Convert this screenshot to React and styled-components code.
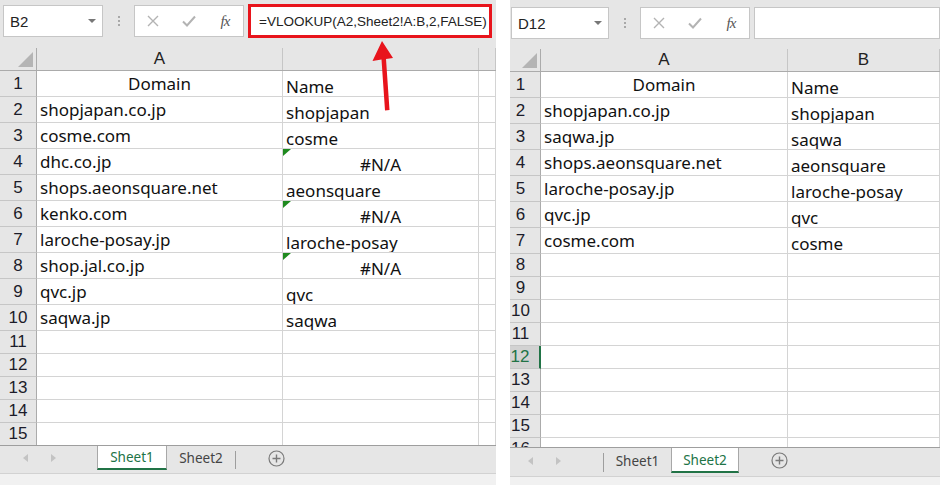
import React from 'react'
import styled, { createGlobalStyle, css } from 'styled-components'

const GlobalStyle = createGlobalStyle`
  html, body { margin: 0; padding: 0; background: #fff; }
  body { width: 940px; height: 485px; overflow: hidden; }
`

const Page = styled.div`
  display: flex;
  gap: 14px;
  width: 940px;
  height: 485px;
  overflow: hidden;
  background: #fff;
`

const Panel = styled.div`
  position: relative;
  flex: 0 0 ${p => p.$w}px;
  display: flex;
  flex-direction: column;
  background: #e6e6e6;
  overflow: hidden;
`

const TopBar = styled.div`
  flex: 0 0 ${p => p.$h}px;
  box-sizing: border-box;
  display: flex;
  align-items: flex-start;
  padding: ${p => p.$pt}px ${p => p.$pr}px 0 ${p => p.$pl}px;
`

const NameBox = styled.div`
  box-sizing: border-box;
  flex: 0 0 ${p => p.$w}px;
  height: 32px;
  background: #fff;
  border: 1px solid #c6c6c6;
  display: flex;
  align-items: center;
  justify-content: space-between;
  padding: 0 6px 0 6px;
  font: 15px "Liberation Sans", sans-serif;
  color: #222;
`

const Caret = styled.span`
  width: 0;
  height: 0;
  border-left: 4px solid transparent;
  border-right: 4px solid transparent;
  border-top: 4px solid #777;
`

const Dots = styled.div`
  flex: 0 0 31px;
  height: 32px;
  display: flex;
  flex-direction: column;
  align-items: center;
  justify-content: center;
  gap: 2px;
  > i {
    width: 2px;
    height: 2px;
    background: #a8a8a8;
  }
`

const FnBox = styled.div`
  box-sizing: border-box;
  flex: 0 0 108px;
  height: 32px;
  background: #fff;
  border: 1px solid #c6c6c6;
  display: grid;
  grid-template-columns: 36px 36px 36px;
  align-items: center;
  justify-items: center;
`

const Fx = styled.span`
  font: italic 15px "Liberation Serif", serif;
  color: #555;
  letter-spacing: -1px;
`

const FormulaBar = styled.div`
  box-sizing: border-box;
  flex: 1;
  margin-left: 4px;
  height: ${p => (p.$hot ? 34 : 32)}px;
  margin-top: ${p => (p.$hot ? -1 : 0)}px;
  background: #fff;
  border: ${p => (p.$hot ? '3px solid #e8141c' : '1px solid #c6c6c6')};
  display: flex;
  align-items: center;
  padding-left: 8px;
  font: 13.5px "Liberation Sans", sans-serif;
  color: #222;
  white-space: nowrap;
`

const HeaderRow = styled.div`
  flex: 0 0 23px;
  box-sizing: border-box;
  display: grid;
  grid-template-columns: ${p => p.$cols};
  border-bottom: 1px solid #ababab;
`

const Corner = styled.div`
  position: relative;
  border-right: 1px solid #ababab;
  &::after {
    content: '';
    position: absolute;
    right: 3px;
    bottom: 3px;
    border-left: 15px solid transparent;
    border-bottom: 15px solid #b4b4b4;
  }
`

const ColHead = styled.div`
  border-right: 1px solid #c6c6c6;
  display: flex;
  align-items: center;
  justify-content: center;
  font: 17px "Liberation Sans", sans-serif;
  color: #222;
`

const Body = styled.div`
  flex: 1 1 0;
  min-height: 0;
  background: #fff;
  overflow: hidden;
`

const Row = styled.div`
  display: grid;
  grid-template-columns: ${p => p.$cols};
  height: ${p => p.$h}px;
`

const RowNum = styled.div`
  box-sizing: border-box;
  background: #e6e6e6;
  border-right: 1px solid #ababab;
  border-bottom: 1px solid #c6c6c6;
  display: flex;
  align-items: center;
  justify-content: center;
  padding-right: ${p => p.$shift || 0}px;
  font: 17px "Liberation Sans", sans-serif;
  color: #1c1c2a;
  ${p => p.$active && css`
    background: #d2d2d2;
    color: #217346;
    border-right: 2px solid #217346;
  `}
`

const Cell = styled.div`
  position: relative;
  box-sizing: border-box;
  border-right: 1px solid #d4d4d4;
  border-bottom: 1px solid #d4d4d4;
  display: flex;
  align-items: center;
  justify-content: ${p => (p.$center ? 'center' : 'flex-start')};
  padding: ${p => (p.$low ? 5 : 0)}px 3px 0 3px;
  font: 17px "Noto Sans", sans-serif;
  color: #111;
  white-space: nowrap;
  overflow: hidden;
  ${p => p.$err && css`
    &::before {
      content: '';
      position: absolute;
      left: 0;
      top: 0;
      border-top: 7px solid #1f8a1f;
      border-right: 8px solid transparent;
    }
  `}
`

const TabBar = styled.div`
  flex: 0 0 ${p => p.$h}px;
  box-sizing: border-box;
  display: flex;
  align-items: stretch;
  border-top: 1px solid #9e9e9e;
  padding-bottom: 3px;
`

const Nav = styled.div`
  flex: 0 0 ${p => p.$w}px;
  box-sizing: border-box;
  display: flex;
  align-items: center;
  gap: 23px;
  padding-left: ${p => p.$pl}px;
`

const NavArrow = styled.span`
  width: 0;
  height: 0;
  border-top: 4px solid transparent;
  border-bottom: 4px solid transparent;
  ${p => (p.$right ? 'border-left' : 'border-right')}: 5px solid #c3c3c3;
`

const Tab = styled.div`
  flex: 0 0 ${p => p.$w}px;
  box-sizing: border-box;
  display: flex;
  align-items: center;
  justify-content: center;
  font: 13.5px "Noto Sans", sans-serif;
  color: #444;
  ${p => p.$active && css`
    background: #fff;
    color: #217346;
    border-left: 1px solid #a8a8a8;
    border-right: 1px solid #a8a8a8;
    border-bottom: 2px solid #217346;
  `}
`

const TabSep = styled.div`
  flex: 0 0 1px;
  background: #9e9e9e;
  margin: 5px 0 1px;
`

const AddSheet = styled.div`
  margin-left: ${p => p.$ml}px;
  display: flex;
  align-items: center;
`

const Strip = styled.div`
  flex: 0 0 ${p => p.$h}px;
  box-sizing: border-box;
  background: #f1f1f1;
  border-top: 1px solid #d2d2d2;
`

const Overlay = styled.svg`
  position: absolute;
  left: 0;
  top: 0;
  pointer-events: none;
`

const leftData = [
  ['Domain', 'Name'],
  ['shopjapan.co.jp', 'shopjapan'],
  ['cosme.com', 'cosme'],
  ['dhc.co.jp', '#N/A'],
  ['shops.aeonsquare.net', 'aeonsquare'],
  ['kenko.com', '#N/A'],
  ['laroche-posay.jp', 'laroche-posay'],
  ['shop.jal.co.jp', '#N/A'],
  ['qvc.jp', 'qvc'],
  ['saqwa.jp', 'saqwa'],
]

const rightData = [
  ['Domain', 'Name'],
  ['shopjapan.co.jp', 'shopjapan'],
  ['saqwa.jp', 'saqwa'],
  ['shops.aeonsquare.net', 'aeonsquare'],
  ['laroche-posay.jp', 'laroche-posay'],
  ['qvc.jp', 'qvc'],
  ['cosme.com', 'cosme'],
]

function XIcon() {
  return (
    <svg width="12" height="12" viewBox="0 0 12 12">
      <path d="M1 1L11 11M11 1L1 11" stroke="#b3b3b3" strokeWidth="1.4" fill="none" />
    </svg>
  )
}

function CheckIcon() {
  return (
    <svg width="14" height="12" viewBox="0 0 14 12">
      <path d="M1 6.5L5 10.5L13 1.5" stroke="#b3b3b3" strokeWidth="2" fill="none" />
    </svg>
  )
}

function PlusIcon() {
  return (
    <svg width="17" height="17" viewBox="0 0 17 17">
      <circle cx="8.5" cy="8.5" r="7.5" stroke="#7a7a7a" strokeWidth="1.2" fill="none" />
      <path d="M8.5 4.5V12.5M4.5 8.5H12.5" stroke="#7a7a7a" strokeWidth="1.4" />
    </svg>
  )
}

function FormulaArea({ name, nameW, pt, pl, pr, h, hot, formula }) {
  return (
    <TopBar $h={h} $pt={pt} $pl={pl} $pr={pr}>
      <NameBox $w={nameW}>
        <span>{name}</span>
        <Caret />
      </NameBox>
      <Dots><i /><i /><i /></Dots>
      <FnBox>
        <XIcon />
        <CheckIcon />
        <Fx>fx</Fx>
      </FnBox>
      <FormulaBar $hot={hot}>{formula}</FormulaBar>
    </TopBar>
  )
}

function Sheet({ cols, colHeads, data, tallCount, shortCount, shift, activeRow }) {
  const rows = []
  for (let i = 0; i < tallCount + shortCount; i++) {
    const n = i + 1
    const r = data[i] || ['', '']
    rows.push(
      <Row key={n} $cols={cols} $h={i < tallCount ? 26 : 23}>
        <RowNum $shift={shift} $active={n === activeRow}>{n}</RowNum>
        <Cell $center={n === 1}>{r[0]}</Cell>
        <Cell $low $center={r[1] === '#N/A'} $err={r[1] === '#N/A'}>{r[1]}</Cell>
        <Cell />
      </Row>
    )
  }
  return (
    <>
      <HeaderRow $cols={cols}>
        <Corner />
        {colHeads.map((c, i) => <ColHead key={i}>{c}</ColHead>)}
      </HeaderRow>
      <Body>{rows}</Body>
    </>
  )
}

export default function App() {
  const leftCols = '37px 246px 196px 1fr'
  const rightCols = '31px 247px 152px 1fr'
  return (
    <Page>
      <GlobalStyle />
      <Panel $w={496}>
        <FormulaArea
          name="B2" nameW={100} h={48} pt={5} pl={3} pr={4} hot
          formula="=VLOOKUP(A2,Sheet2!A:B,2,FALSE)"
        />
        <Sheet cols={leftCols} colHeads={['A', '', '']} data={leftData} tallCount={10} shortCount={5} />
        <TabBar $h={28}>
          <Nav $w={97} $pl={23}>
            <NavArrow />
            <NavArrow $right />
          </Nav>
          <Tab $w={70} $active>Sheet1</Tab>
          <Tab $w={68}>Sheet2</Tab>
          <TabSep />
          <AddSheet $ml={32}><PlusIcon /></AddSheet>
        </TabBar>
        <Strip $h={12} />
        <Overlay width="496" height="485" viewBox="0 0 496 485">
          <path d="M382 41L372.5 61L381.5 59.5L385 110.5L389.5 110L386 59L393 58Z" fill="#e8141c" />
        </Overlay>
      </Panel>
      <Panel $w={430}>
        <FormulaArea
          name="D12" nameW={98} h={49} pt={7} pl={1} pr={0}
          formula=""
        />
        <Sheet cols={rightCols} colHeads={['A', 'B', '']} data={rightData} tallCount={7} shortCount={9} shift={9} activeRow={12} />
        <TabBar $h={29}>
          <Nav $w={93} $pl={18}>
            <NavArrow />
            <NavArrow $right />
          </Nav>
          <TabSep />
          <Tab $w={67}>Sheet1</Tab>
          <Tab $w={68} $active>Sheet2</Tab>
          <AddSheet $ml={32}><PlusIcon /></AddSheet>
        </TabBar>
        <Strip $h={9} />
      </Panel>
    </Page>
  )
}
